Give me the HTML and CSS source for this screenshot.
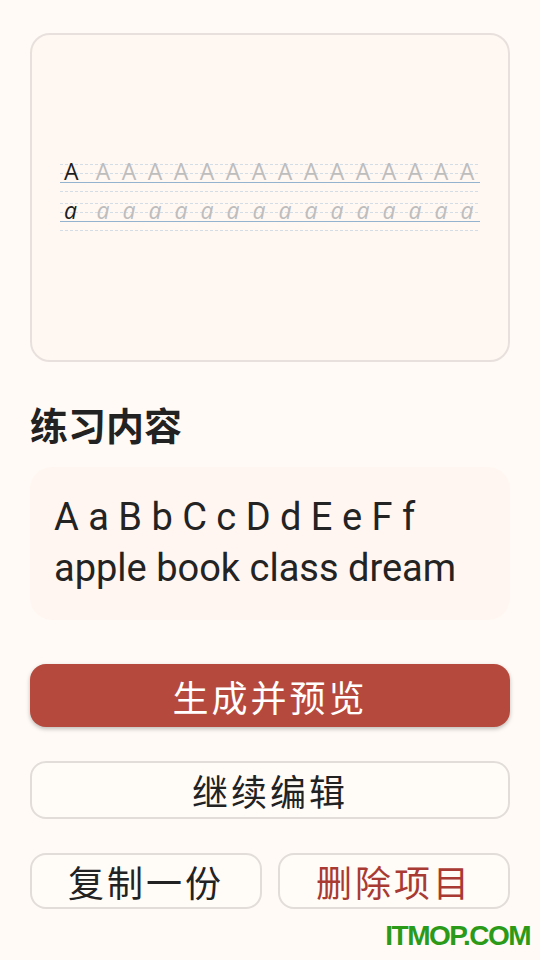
FILE: index.html
```html
<!DOCTYPE html>
<html lang="zh-CN">
<head>
  <meta charset="UTF-8">
  <meta name="viewport" content="width=device-width, initial-scale=1.0">
  <title>字帖项目</title>
  <link rel="stylesheet" href="styles.css">
</head>
<body>
  <div class="page">
    <div class="preview-card">
      <div class="sheet">
        <div class="sheet-row upper">
          <span class="cell first">A</span>
          <span class="cell">A</span><span class="cell">A</span><span class="cell">A</span><span class="cell">A</span>
          <span class="cell">A</span><span class="cell">A</span><span class="cell">A</span><span class="cell">A</span>
          <span class="cell">A</span><span class="cell">A</span><span class="cell">A</span><span class="cell">A</span>
          <span class="cell">A</span><span class="cell">A</span><span class="cell">A</span>
        </div>
        <div class="sheet-row lower">
          <span class="cell first">a</span>
          <span class="cell">a</span><span class="cell">a</span><span class="cell">a</span><span class="cell">a</span>
          <span class="cell">a</span><span class="cell">a</span><span class="cell">a</span><span class="cell">a</span>
          <span class="cell">a</span><span class="cell">a</span><span class="cell">a</span><span class="cell">a</span>
          <span class="cell">a</span><span class="cell">a</span><span class="cell">a</span>
        </div>
      </div>
    </div>

    <h2 class="section-title">练习内容</h2>
    <div class="content-box">
      <p>A a B b C c D d E e F f</p>
      <p>apple book class dream</p>
    </div>

    <div class="actions">
      <button class="btn btn-primary">生成并预览</button>
      <button class="btn btn-outline">继续编辑</button>
      <div class="btn-row">
        <button class="btn btn-outline">复制一份</button>
        <button class="btn btn-outline btn-danger">删除项目</button>
      </div>
    </div>
  </div>

  <div class="watermark">ITMOP.COM</div>
</body>
</html>
```

FILE: styles.css
```css
body {
  margin: 0;
  background-color: #fffaf5;
  font-family: Roboto, "Noto Sans CJK SC", sans-serif;
  color: #222222;
}
.page {
  padding: 33px 30px 0;
}
.preview-card {
  height: 325px;
  border: 2px solid #e8e0dc;
  border-radius: 20px;
  background-color: #fff7f2;
  display: flex;
  align-items: center;
  justify-content: center;
}
.sheet {
  width: 420px;
  display: flex;
  flex-direction: column;
  gap: 11px;
}
.sheet-row {
  height: 28px;
  display: flex;
  background:
    linear-gradient(#94b3cf, #94b3cf) 0 18px / 100% 1px no-repeat,
    repeating-linear-gradient(90deg, #d3dde6 0 3px, transparent 3px 5px) 0 0 / 100% 1px no-repeat,
    repeating-linear-gradient(90deg, #d3dde6 0 3px, transparent 3px 5px) 0 9px / 100% 1px no-repeat,
    repeating-linear-gradient(90deg, #d3dde6 0 3px, transparent 3px 5px) 0 27px / 100% 1px no-repeat;
}
.cell {
  flex: 1;
  text-align: center;
  font-family: "Open Sans", sans-serif;
  font-size: 23px;
  line-height: 14px;
  color: #bdbdbd;
}
.lower .cell {
  font-style: italic;
}
.cell.first {
  color: #1e1e1e;
  text-align: left;
  padding-left: 4px;
}
.section-title {
  margin: 38px 0 0;
  font-family: "Noto Sans CJK SC", sans-serif;
  font-size: 38px;
  font-weight: 700;
  line-height: 48px;
  color: #222222;
}
.content-box {
  margin-top: 19px;
  padding: 25px 24px 26px;
  background-color: #fff6f1;
  border-radius: 22px;
}
.content-box p {
  margin: 0;
  font-size: 38px;
  line-height: 51px;
  color: #232323;
}
.actions {
  margin-top: 44px;
  display: flex;
  flex-direction: column;
  gap: 34px;
}
.btn {
  display: block;
  width: 100%;
  margin: 0;
  padding: 0;
  font-family: "Noto Sans CJK SC", sans-serif;
  font-size: 36px;
  letter-spacing: 3px;
  border-radius: 16px;
  cursor: pointer;
}
.btn-primary {
  height: 63px;
  border: none;
  background-color: #b6493e;
  color: #ffffff;
  box-shadow: 0 2px 4px rgba(0, 0, 0, 0.25);
}
.btn-outline {
  height: 58px;
  border: 2px solid #e3ddd9;
  background-color: #fffbf7;
  color: #222222;
}
.btn-row {
  display: flex;
  gap: 16px;
}
.btn-row .btn {
  height: 56px;
}
.btn-danger {
  color: #a93a33;
}
.watermark {
  position: absolute;
  right: 10px;
  top: 920px;
  font-family: "Liberation Sans", sans-serif;
  font-weight: 700;
  font-size: 28px;
  letter-spacing: -1.5px;
  color: #2a9a18;
}
```
